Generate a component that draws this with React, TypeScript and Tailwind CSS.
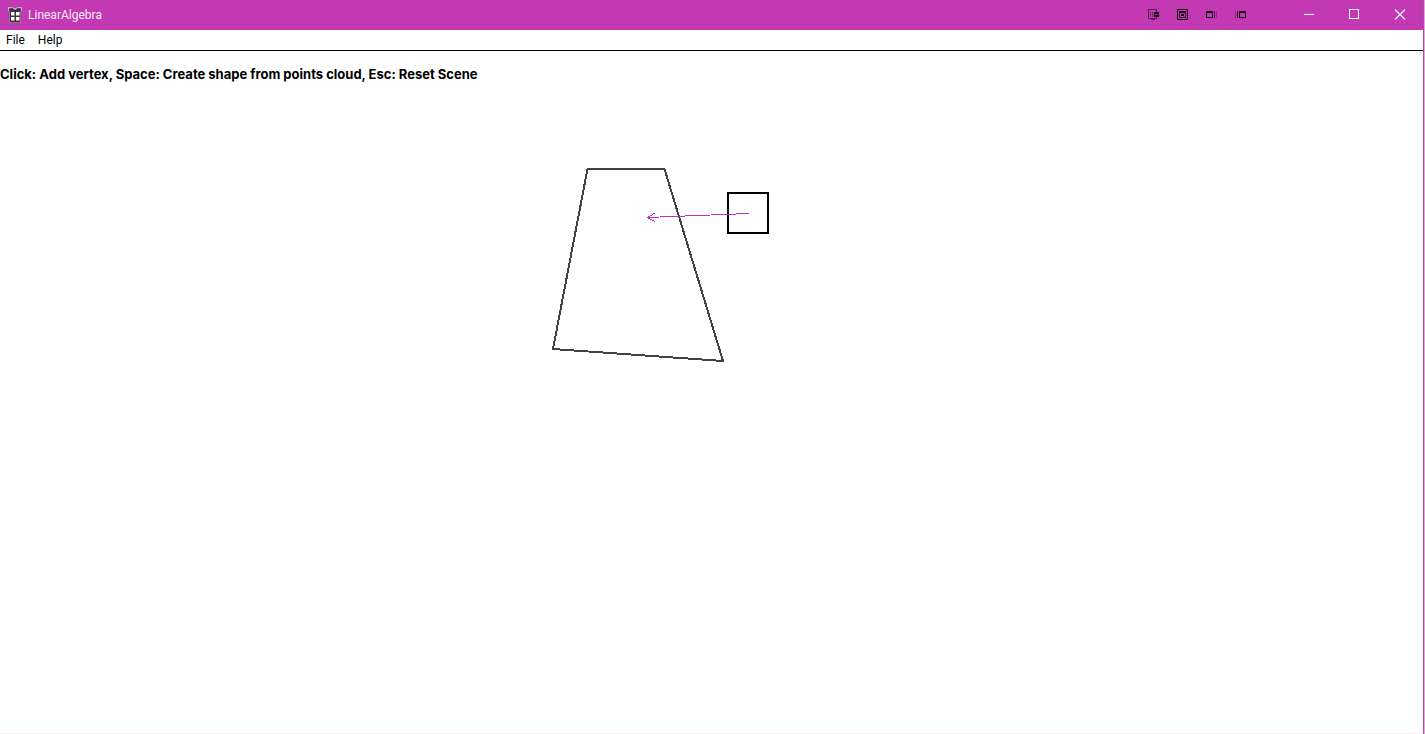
import type { ReactNode } from "react";

function AppIcon() {
  return (
    <svg width="16" height="16" viewBox="0 0 16 16" aria-hidden="true">
      <path d="M1 0h4l2 1h2l2-1h4v4h-1v12H2V4H1z" fill="#d0a9ce" />
      <path d="M2 1.500l3-.5 3 2 3-2 3 .5v2l-.5.5v11.500h-11V4l-.5-.5z" fill="#3a343b" />
      <path d="M4 5h3.500v3.500H4zM9 5h3.500v3.500H9zM4 10h3.500v3.500H4zM9 10h3.500v3.500H9z" fill="#fff" />
    </svg>
  );
}

function ToolButton({ label, children }: { label: string; children: ReactNode }) {
  return (
    <button type="button" aria-label={label} className="flex h-full w-[29px] items-center justify-center">
      <svg width="11" height="12" viewBox="0 0 11 12" fill="none" shapeRendering="crispEdges">
        {children}
      </svg>
    </button>
  );
}

function WindowButton({ label, path }: { label: string; path: string }) {
  return (
    <button type="button" aria-label={label} className="flex h-full w-[46px] items-center justify-center">
      <svg width="12" height="12" viewBox="0 0 12 12" fill="none" stroke="#fff" strokeWidth="1.1">
        <path d={path} />
      </svg>
    </button>
  );
}

export default function App() {
  return (
    <div className="flex min-h-screen border-r border-[#dfa5dc] bg-white font-['Roboto','Noto_Sans',sans-serif] text-black">
      <div className="flex flex-1 flex-col border-r border-[#a8509f]">
        <header className="flex h-[30px] items-center bg-[#c239b3]">
          <div className="flex flex-1 items-center gap-1 pl-[7px]">
            <AppIcon />
            <h1 className="pl-px text-xs text-[#fbe9f9]">LinearAlgebra</h1>
          </div>
          <div className="mr-[30px] flex h-full">
            <ToolButton label="Select device">
              <path d="M0 0h9v1H0zM0 1h1v8H0zM8 1h1v2H8zM0 9h9v1H0zM8 8h1v1H8zM3 10h4v1H3z" fill="#5d1a57" />
              <path d="M2 3h1v5H2zM4 3h1v5H4z" fill="#74226c" />
              <path d="M6 3h5v5H6z" fill="#0d040c" />
              <path d="M7 5h3v1H7z" fill="#c239b3" />
            </ToolButton>
            <ToolButton label="Center window">
              <path d="M.5.5h10v10H.5z" stroke="#14050f" />
              <path d="M2.500 2.500h6v6h-6z" stroke="#3d1039" />
              <path d="M2 2h7v2H2zM4 5h3v2H4z" fill="#1a0618" />
            </ToolButton>
            <ToolButton label="Dock left">
              <path d="M0 2h7v2H0zM0 4h1v5H0zM6 4h1v5H6zM1 8h5v1H1z" fill="#0d040c" />
              <path d="M8 2h1v7H8z" fill="#4a1545" />
              <path d="M10 2h1v7h-1z" fill="#8a2980" />
            </ToolButton>
            <ToolButton label="Dock right">
              <path d="M4 2h7v2H4zM4 4h1v5H4zM10 4h1v5h-1zM5 8h5v1H5z" fill="#0d040c" />
              <path d="M2 2h1v7H2z" fill="#4a1545" />
              <path d="M0 2h1v7H0z" fill="#8a2980" />
            </ToolButton>
          </div>
          <div className="flex h-full">
            <WindowButton label="Minimize" path="M2 5.500h10" />
            <WindowButton label="Maximize" path="M1.500.5h9v9h-9z" />
            <WindowButton label="Close" path="M1 .5l10 10M11 .5l-10 10" />
          </div>
        </header>
        <nav className="flex h-[21px] items-center gap-[13px] border-b border-black pl-1.5 text-xs">
          <button type="button">File</button>
          <button type="button">Help</button>
        </nav>
        <main className="relative flex-1 border-b border-[#fbeefa] pt-4">
          <p className="font-['Inter',sans-serif] text-[13px] leading-[14px] font-bold">
            Click: Add vertex, Space: Create shape from points cloud, Esc: Reset Scene
          </p>
          <svg
            className="absolute inset-0 size-full"
            fill="none"
            role="img"
            aria-label="Quadrilateral and a moving square"
            shapeRendering="crispEdges"
          >
            <path d="M587.500 118H664.500L723 310L553 298Z" stroke="#444047" strokeWidth="2" />
            <path d="M728 142H768V182H728Z" stroke="#000" strokeWidth="2" />
            <path d="M749 162.500L647 166.500M655 162L647.500 166.500L655 170.500" stroke="#c32fc0" />
            <path d="M648 166h3v1h-3z" fill="#d81fd6" />
          </svg>
        </main>
      </div>
    </div>
  );
}
